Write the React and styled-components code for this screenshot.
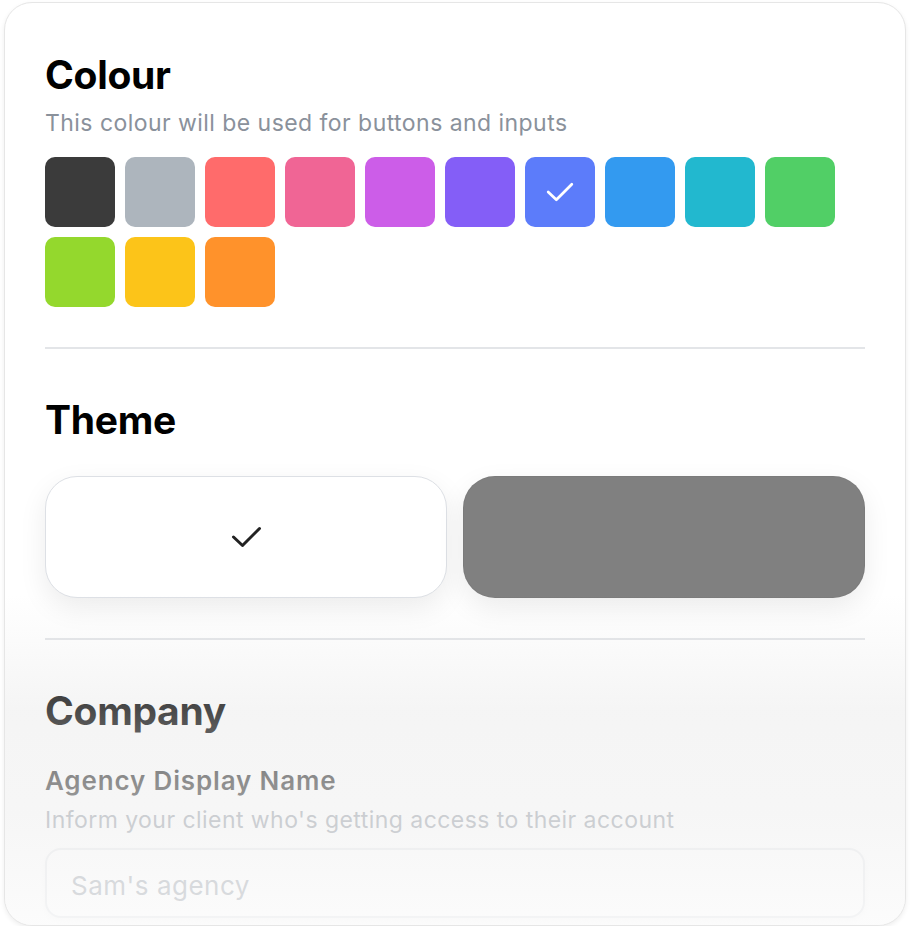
import React from "react";
import styled, { createGlobalStyle } from "styled-components";

const GlobalStyle = createGlobalStyle`
  * {
    box-sizing: border-box;
  }

  body {
    margin: 0;
    background: #fff;
    font-family: Inter, "Noto Sans", "Liberation Sans", sans-serif;
    -webkit-font-smoothing: antialiased;
  }
`;

const colours = [
  "#3b3b3b",
  "#adb5bd",
  "#ff6b6b",
  "#f06595",
  "#cc5de8",
  "#845ef7",
  "#5c7cfa",
  "#339af0",
  "#22b8cf",
  "#51cf66",
  "#94d82d",
  "#fcc419",
  "#ff922b",
];

const CheckMark = ({ color, width, height }) => (
  <svg width={width} height={height} viewBox="0 0 30 22" fill="none">
    <polyline
      points="2,11 11,19.5 28,2.5"
      stroke={color}
      strokeWidth="3"
      strokeLinecap="round"
      strokeLinejoin="round"
    />
  </svg>
);

const App = () => {
  return (
    <>
      <GlobalStyle />
      <Card>
        <Title>Colour</Title>
        <Subtitle>This colour will be used for buttons and inputs</Subtitle>
        <Swatches>
          {colours.map((c) => (
            <Swatch key={c} $color={c}>
              {c === "#5c7cfa" && <CheckMark color="#fff" width={28} height={20} />}
            </Swatch>
          ))}
        </Swatches>

        <Divider />

        <Title $top={47}>Theme</Title>
        <ThemeRow>
          <ThemeOption $dark={false}>
            <CheckMark color="#222" width={31} height={22} />
          </ThemeOption>
          <ThemeOption $dark />
        </ThemeRow>

        <Divider />

        <Title $top={47}>Company</Title>
        <Label>Agency Display Name</Label>
        <Hint>Inform your client who's getting access to their account</Hint>
        <Input placeholder="Sam's agency" />

        <Fade />
      </Card>
    </>
  );
};

const Card = styled.div`
  position: relative;
  margin: 2px 4px 0;
  width: 902px;
  height: 924px;
  padding: 48px 40px 0 40px;
  background: #fff;
  border: 1px solid #e6e6e6;
  border-radius: 28px;
  box-shadow: 0 2px 5px rgba(0, 0, 0, 0.07);
  overflow: hidden;
  display: flex;
  flex-direction: column;
`;

const Title = styled.h2`
  margin: ${(p) => (p.$top ? `${p.$top}px` : "0")} 0 0;
  font-size: 39px;
  line-height: 48px;
  font-weight: 700;
  color: #000;
  letter-spacing: -0.3px;
`;

const Subtitle = styled.p`
  margin: 9px 0 0;
  font-size: 23px;
  line-height: 30px;
  letter-spacing: 0.45px;
  color: #8a919b;
`;

const Swatches = styled.div`
  margin-top: 19px;
  display: grid;
  grid-template-columns: repeat(10, 70px);
  grid-auto-rows: 70px;
  gap: 10px;
`;

const Swatch = styled.div`
  background: ${(p) => p.$color};
  border-radius: 10px;
  display: flex;
  align-items: center;
  justify-content: center;
`;

const Divider = styled.hr`
  margin: 40px 0 0;
  border: none;
  height: 2px;
  background: #e3e5e8;
`;

const ThemeRow = styled.div`
  margin-top: 32px;
  display: grid;
  grid-template-columns: 1fr 1fr;
  gap: 16px;
`;

const ThemeOption = styled.div`
  height: 122px;
  border-radius: 32px;
  background: ${(p) => (p.$dark ? "#808080" : "#fff")};
  border: 1px solid ${(p) => (p.$dark ? "rgba(0,0,0,0.04)" : "#dde0e5")};
  box-shadow: 0 10px 28px rgba(0, 0, 0, 0.08);
  display: flex;
  align-items: center;
  justify-content: center;
`;

const Label = styled.div`
  margin-top: 31px;
  font-size: 26px;
  line-height: 30px;
  font-weight: 600;
  letter-spacing: 0.85px;
  color: #111;
`;

const Hint = styled.div`
  margin-top: 9px;
  font-size: 23px;
  line-height: 30px;
  letter-spacing: 0.45px;
  color: #8a919b;
`;

const Input = styled.input`
  margin-top: 13px;
  width: 100%;
  height: 70px;
  flex-shrink: 0;
  padding: 4px 24px 0;
  border: 2px solid #e6e8eb;
  border-radius: 16px;
  background: #fff;
  box-shadow: 0 2px 6px rgba(0, 0, 0, 0.04);
  font-family: inherit;
  font-size: 26px;
  letter-spacing: 0.5px;
  color: #111;
  outline: none;

  &::placeholder {
    color: #9aa1aa;
  }
`;

const Fade = styled.div`
  position: absolute;
  left: 0;
  right: 0;
  bottom: 0;
  height: 330px;
  pointer-events: none;
  background: linear-gradient(
    to bottom,
    rgba(222, 222, 222, 0) 0%,
    rgba(224, 224, 224, 0.33) 35%,
    rgba(238, 238, 238, 0.55) 55%,
    rgba(241, 241, 241, 0.63) 67%,
    rgba(250, 250, 250, 0.68) 100%
  );
`;

export default App;
